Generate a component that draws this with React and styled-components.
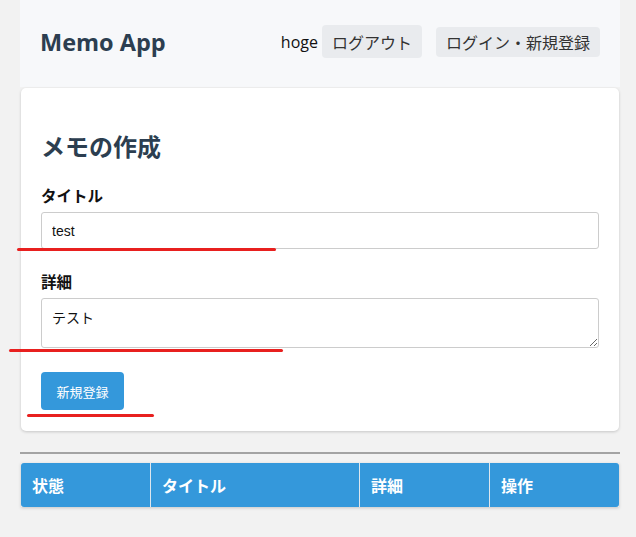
import styled, { createGlobalStyle } from "styled-components";

const GlobalStyle = createGlobalStyle`
  body {
    margin: 0;
    background: #f2f2f2;
    font-family: "Open Sans", "Noto Sans CJK JP", sans-serif;
    color: #222;
  }
`;

const Page = styled.div`
  position: relative;
  width: 600px;
  padding: 0 0 30px 20px;
`;

const Header = styled.header`
  display: flex;
  align-items: center;
  justify-content: space-between;
  height: 83px;
  padding: 0 20px 4px;
  background: #f7f8fa;
`;

const Logo = styled.h1`
  margin: 0;
  font-size: 23.5px;
  font-weight: 700;
  color: #2c3e50;
`;

const Nav = styled.nav`
  display: flex;
  align-items: center;
  gap: 14px;
`;

const User = styled.span`
  display: flex;
  align-items: center;
  gap: 4px;
  font-size: 16px;
  color: #111;
`;

const NavButton = styled.span`
  display: inline-flex;
  align-items: center;
  padding: 0 10px;
  height: ${({ tall }) => (tall ? 33 : 30)}px;
  border-radius: 4px;
  background: #e9ebee;
  color: #333;
  font-size: 16px;
  font-family: "Noto Sans CJK JP", sans-serif;
`;

const Card = styled.section`
  margin: 1px 1px 0;
  padding: 24px 20px 21px;
  background: #fff;
  border-radius: 5px;
  box-shadow: 0 1px 3px rgba(0, 0, 0, 0.18);
`;

const Title = styled.h2`
  margin: 16px 0 21px;
  font-size: 24px;
  font-weight: 700;
  color: #2c3e50;
  font-family: "Noto Sans CJK JP", sans-serif;
`;

const Field = styled.div`
  display: flex;
  flex-direction: column;
  margin-bottom: 21px;
`;

const Label = styled.label`
  font-size: 15.5px;
  font-weight: 700;
  color: #111;
  margin-bottom: 6px;
  font-family: "Noto Sans CJK JP", sans-serif;
`;

const Input = styled.input`
  box-sizing: border-box;
  width: 100%;
  height: 37px;
  padding: 0 10px;
  border: 1px solid #ccc;
  border-radius: 3px;
  font-size: 14px;
  font-family: "Liberation Sans", "Noto Sans CJK JP", sans-serif;
  color: #111;
`;

const TextArea = styled.textarea`
  box-sizing: border-box;
  width: 100%;
  height: 50px;
  padding: 8px 10px;
  border: 1px solid #ccc;
  border-radius: 3px;
  font-size: 14px;
  font-family: "Liberation Sans", "Noto Sans CJK JP", sans-serif;
  color: #111;
  resize: vertical;
`;

const SubmitButton = styled.button`
  display: block;
  width: 83px;
  height: 38px;
  border: 0;
  border-radius: 4px;
  background: #3498db;
  color: #fff;
  font-size: 13px;
  font-family: "Noto Sans CJK JP", sans-serif;
  margin-top: 24px;
`;

const Rule = styled.hr`
  margin: 21px 0 9px;
  border: 0;
  border-top: 2px solid #a3a3a3;
`;

const Table = styled.table`
  width: 598px;
  margin: 0 1px;
  border-collapse: collapse;
  box-shadow: 0 1px 3px rgba(0, 0, 0, 0.18);
`;

const Th = styled.th`
  width: ${({ w }) => w}px;
  height: 44px;
  padding: 0 11px;
  background: #3498db;
  color: #fff;
  font-size: 16px;
  font-weight: 700;
  text-align: left;
  font-family: "Noto Sans CJK JP", sans-serif;
  border-left: 1px solid #dde6ee;
  &:first-child {
    border-left: 0;
    border-radius: 3px 0 0 3px;
  }
  &:last-child {
    border-radius: 0 3px 3px 0;
  }
`;

const Mark = styled.div`
  position: absolute;
  left: ${({ x }) => x}px;
  top: ${({ y }) => y}px;
  width: ${({ w }) => w}px;
  height: 3px;
  border-radius: 2px;
  background: #e8201f;
`;

export default function App() {
  return (
    <>
      <GlobalStyle />
      <Page>
        <Header>
          <Logo>Memo App</Logo>
          <Nav>
            <User>
              hoge
              <NavButton tall>ログアウト</NavButton>
            </User>
            <NavButton>ログイン・新規登録</NavButton>
          </Nav>
        </Header>

        <Card>
          <Title>メモの作成</Title>
          <Field>
            <Label>タイトル</Label>
            <Input defaultValue="test" />
          </Field>
          <Field>
            <Label>詳細</Label>
            <TextArea defaultValue="テスト" />
          </Field>
          <SubmitButton>新規登録</SubmitButton>
        </Card>

        <Rule />

        <Table>
          <thead>
            <tr>
              <Th w={107}>状態</Th>
              <Th w={186}>タイトル</Th>
              <Th w={107}>詳細</Th>
              <Th w={107}>操作</Th>
            </tr>
          </thead>
        </Table>

        <Mark x={17} y={248} w={259} />
        <Mark x={9} y={349} w={274} />
        <Mark x={27} y={414} w={127} />
      </Page>
    </>
  );
}
